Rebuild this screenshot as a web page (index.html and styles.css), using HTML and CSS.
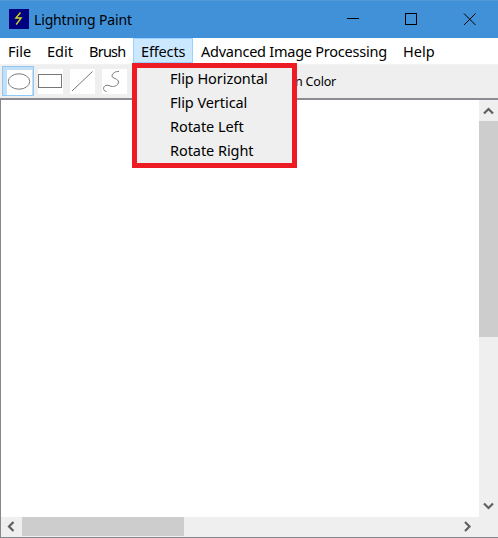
FILE: index.html
```html
<!DOCTYPE html>
<html lang="en">
<head>
<meta charset="utf-8">
<title>Lightning Paint</title>
<link rel="stylesheet" href="styles.css">
</head>
<body>
<div class="window">
  <header class="titlebar">
    <svg class="logo" width="20" height="20" viewBox="0 0 20 20"><rect width="20" height="20" fill="#000080"/><path d="M11.500 3.500L6.800 9H12.200L7.200 15.500" fill="none" stroke="#d8d820" stroke-width="1.300"/></svg>
    <span class="title">Lightning Paint</span>
    <div class="controls">
      <svg width="58" height="38"><path d="M12 18.5h12" stroke="#000"/></svg>
      <svg width="58" height="38"><rect x="12.5" y="13.5" width="11" height="11" fill="none" stroke="#000"/></svg>
      <svg width="47" height="38"><path d="M13 13.5l11.5 11.5M24.500 13.500L13 25" stroke="#000" fill="none"/></svg>
    </div>
  </header>
  <nav class="menubar">
    <span class="menu file">File</span>
    <span class="menu edit">Edit</span>
    <span class="menu brush">Brush</span>
    <div class="menu effects">Effects
      <div class="dropdown">
        <span class="entry">Flip Horizontal</span>
        <span class="entry">Flip Vertical</span>
        <span class="entry">Rotate Left</span>
        <span class="entry">Rotate Right</span>
      </div>
    </div>
    <span class="menu advanced">Advanced Image Processing</span>
    <span class="menu help">Help</span>
  </nav>
  <div class="toolbar">
    <div class="tool selected"><svg width="25" height="25"><rect width="25" height="25" fill="#fff"/><ellipse cx="12" cy="11.500" rx="10.700" ry="7.700" fill="none" stroke="#7b7b7b"/></svg></div>
    <svg class="tool-icon" width="25" height="25"><rect width="25" height="25" fill="#fff"/><rect x=".5" y="5.500" width="23" height="13" fill="none" stroke="#777"/></svg>
    <svg class="tool-icon" width="25" height="25"><rect width="25" height="25" fill="#fff"/><path d="M2 22L22.500 2.500" stroke="#777"/></svg>
    <svg class="tool-icon" width="25" height="25"><rect width="25" height="25" fill="#fff"/><path d="M17 2.500C13.500 2 10 4.500 10 7C10 9.500 16.500 9.500 16.500 13C16.500 16 13 17.500 10.500 17.500C8 17.500 6 15.500 3.500 16.500C1 17.500 .5 22 4.500 22.500" fill="none" stroke="#777"/></svg>
    <span class="color-label">n Color</span>
  </div>
  <main class="workspace">
    <div class="canvas"></div>
    <div class="vscroll">
      <svg width="19" height="21"><path d="M5 13.500L9.500 9L14 13.500" class="arrow"/></svg>
      <div class="vthumb"></div>
      <svg class="down" width="19" height="21"><path d="M5 7.500L9.500 12L14 7.500" class="arrow"/></svg>
    </div>
    <div class="hscroll">
      <svg width="21" height="19"><path d="M12.500 5L8 9.500L12.500 14" class="arrow"/></svg>
      <div class="hthumb"></div>
      <svg class="next" width="21" height="19"><path d="M7 5L11.500 9.500L7 14" class="arrow"/></svg>
    </div>
    <div class="corner"></div>
  </main>
</div>
</body>
</html>
```
FILE: styles.css
```css
* { box-sizing: border-box; }
body { margin: 0; font-family: "Noto Sans", sans-serif; color: #000; }
svg { display: block; flex: none; }
.window { width: 498px; height: 538px; display: flex; flex-direction: column; overflow: hidden; background: #fff; }
.titlebar { height: 38px; flex: none; display: flex; align-items: center; padding-left: 9px; background: #4191d9; border-top: 1px solid #5199d5; }
.logo { margin-top: -1px; }
.title { margin-left: 5px; font-size: 14px; letter-spacing: -.15px; white-space: nowrap; }
.controls { display: flex; margin-left: auto; margin-top: -1px; }
.menubar { height: 27px; flex: none; display: flex; padding-bottom: 2px; border-bottom: 1px solid #f2f2f2; }
.menu { height: 25px; padding-left: 8px; font-size: 14.500px; line-height: 26px; white-space: nowrap; flex: none; }
.file { width: 39px; }
.edit { width: 42px; }
.brush { width: 52px; letter-spacing: -.75px; }
.effects { width: 60px; position: relative; padding-left: 7px; line-height: 24px; letter-spacing: -.15px; border: 1px solid #99d1ff; background: #cce8ff; }
.advanced { width: 202px; letter-spacing: -.24px; }
.dropdown { position: absolute; z-index: 2; left: -2px; top: 24px; width: 165px; height: 105px; border: 5px solid #ed1c24; background: #efefef; display: flex; flex-direction: column; letter-spacing: -.06px; }
.entry { height: 24px; flex: none; padding-left: 33px; line-height: 20px; }
.toolbar { height: 35px; flex: none; display: flex; align-items: flex-start; gap: 7px; padding: 1px 0 0 2px; background: #efefef; border-bottom: 2px solid #8b8b91; }
.tool { width: 32px; height: 30px; padding: 3px 0 0 4px; border: 1px solid #90c8f6; background: #c2dff5; margin-right: -3px; }
.tool-icon { margin-top: 3px; }
.color-label { margin-left: 161px; font-size: 12.500px; line-height: 31px; letter-spacing: -.2px; white-space: nowrap; }
.workspace { flex: 1; display: grid; grid-template-columns: 1fr 19px; grid-template-rows: 1fr 20px; border-left: 1px solid #828790; border-bottom: 1px solid #828790; }
.vscroll { display: flex; flex-direction: column; background: #efefef; }
.vthumb { height: 216px; background: #cdcdcd; }
.down { margin-top: auto; }
.hscroll { display: flex; background: #efefef; }
.hthumb { width: 162px; height: 19px; background: #cdcdcd; }
.next { margin-left: auto; }
.corner { background: #efefef; }
.arrow { fill: none; stroke: #606060; stroke-width: 2.200; }
```
